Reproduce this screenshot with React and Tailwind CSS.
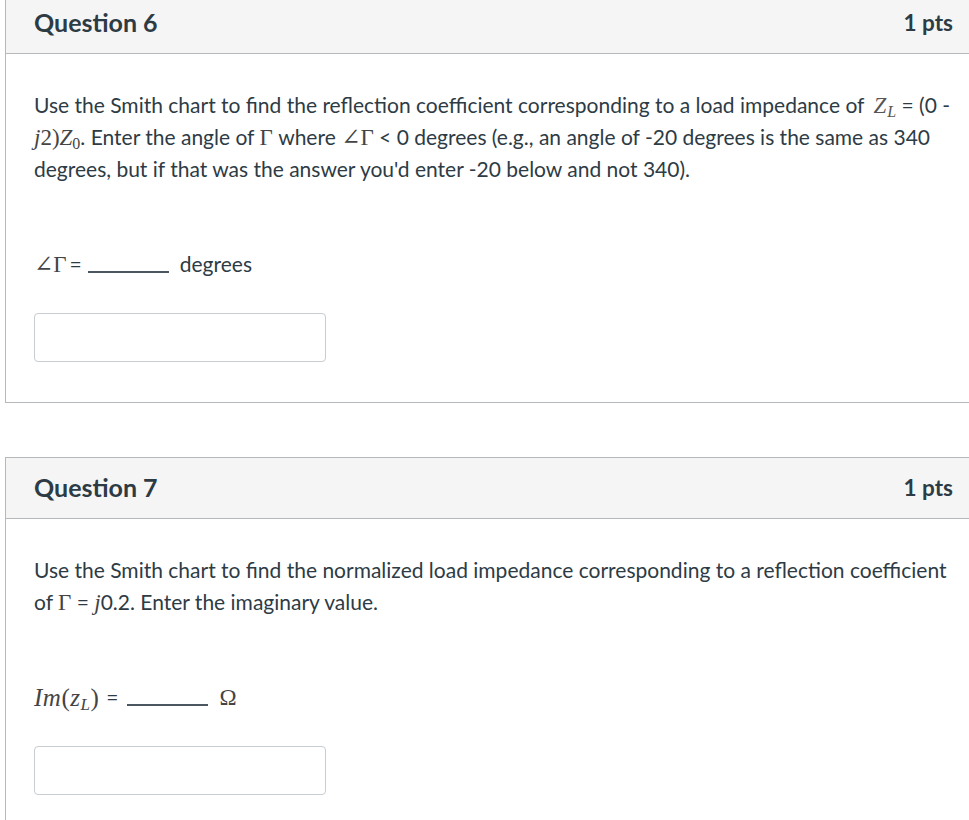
import React from 'react';

const serif = { fontFamily: '"Liberation Serif", "DejaVu Serif", serif' };

const Blank = ({ w = 'w-[81px]', ml = 'ml-[6px]' }) => (
    <span className={`inline-block ${w} ${ml} h-[18px] border-b-[2px] border-[#4a5660] align-baseline`} />
);

const M = ({ children, className = '' }) => (
    <span className={`text-[23px] leading-none text-[#444] ${className}`} style={serif}>{children}</span>
);

const QuestionCard = ({ title, points, children, answer, pClass = '' }) => (
    <div className="w-[977px] ml-[5px] border border-[#b5b9bc] bg-white">
        <div className="h-[61px] bg-[#f5f5f5] border-b border-[#b5b9bc] flex items-center justify-between pl-[28px] pr-[28px]">
            <h2 className="text-[25px] font-bold text-[#2d3b45]">{title}</h2>
            <span className="text-[22.5px] font-bold text-[#2d3b45]">{points}</span>
        </div>
        <div className="pl-[28px] pr-[28px] pt-[35px] pb-[40px]">
            <p className={`text-[21px] leading-[32px] text-[#2d3b45] ${pClass}`}>{children}</p>
            <p className="mt-[63px] h-[32px] text-[21px] leading-[32px] text-[#2d3b45] flex items-center">{answer}</p>
            <input
                type="text"
                className="mt-[33px] block w-[292px] h-[49px] border border-[#c7cdd1] rounded-[4px] bg-white outline-none px-3"
            />
        </div>
    </div>
);

export default function App() {
    return (
        <div className="w-[969px] h-[820px] overflow-hidden bg-white" style={{ fontFamily: 'Lato, "Noto Sans", sans-serif' }}>
            <div className="-mt-[8px] pb-10">
                <QuestionCard
                    title="Question 6"
                    points="1 pts"
                    answer={
                        <>
                            <M>∠Γ</M>
                            <span className="ml-[3px]">=</span>
                            <Blank />
                            <span className="ml-[11px]">degrees</span>
                        </>
                    }
                >
                    Use the Smith chart to find the reflection coefficient corresponding to a load impedance of{' '}
                    <M className="italic ml-[4px] text-[#555]">Z<sub className="text-[16px] ml-[1px]">L</sub></M>{' '}
                    = (0 -{' '}
                    <M><i>j</i>2)<i>Z</i><sub className="text-[16px]">0</sub></M>. Enter the angle of{' '}
                    <M>Γ</M> where{' '}
                    <M>∠Γ</M> &lt; 0 degrees (e.g., an angle of -20 degrees is the same as 340 degrees, but if that was the answer you'd enter -20 below and not 340).
                </QuestionCard>

                <div className="h-[54px]" />

                <QuestionCard
                    title="Question 7"
                    points="1 pts"
                    pClass="max-w-[915px]"
                    answer={
                        <>
                            <M className="text-[25px] tracking-[0.5px]"><i>Im</i>(<i>z</i><sub className="text-[17px] italic">L</sub>)</M>
                            <span className="ml-[7px]">=</span>
                            <Blank ml="ml-[9px]" />
                            <M className="ml-[11px]">Ω</M>
                        </>
                    }
                >
                    Use the Smith chart to find the normalized load impedance corresponding to a reflection coefficient of{' '}
                    <M>Γ</M> = <M><i>j</i></M>0.2. Enter the imaginary value.
                </QuestionCard>
            </div>
        </div>
    );
}
